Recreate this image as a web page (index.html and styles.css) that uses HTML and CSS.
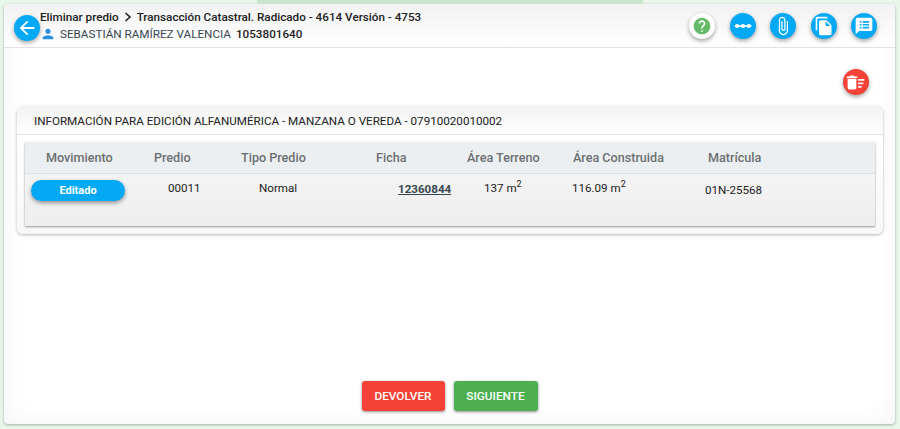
FILE: index.html
```html
<!DOCTYPE html>
<html lang="es">
<head>
  <meta charset="UTF-8">
  <meta name="viewport" content="width=device-width, initial-scale=1.0">
  <title>Eliminar predio</title>
  <link rel="stylesheet" href="styles.css">
</head>
<body>

  <div class="progress"></div>

  <div class="card">
    <header class="topbar">
      <button class="fab fab-back">
        <svg viewBox="0 0 24 24"><path d="M20 11H7.830l5.590-5.590L12 4l-8 8 8 8 1.410-1.410L7.830 13H20v-2z"/></svg>
      </button>
      <div class="title">
        <div class="title-main">
          <span>Eliminar predio</span>
          <svg class="chevron" viewBox="0 0 10 10"><path d="M2.500 1 L7 5 L2.500 9"/></svg>
          <span>Transacción Catastral. Radicado - 4614 Versión - 4753</span>
        </div>
        <div class="title-user">
          <svg class="user-icon" viewBox="0 0 24 24"><path d="M12 12c2.210 0 4-1.790 4-4s-1.790-4-4-4-4 1.790-4 4 1.790 4 4 4zm0 2c-2.670 0-8 1.340-8 4v2h16v-2c0-2.660-5.330-4-8-4z"/></svg>
          <span>SEBASTIÁN RAMÍREZ VALENCIA</span>
          <b>1053801640</b>
        </div>
      </div>
      <div class="actions">
        <button class="fab fab-help">
          <svg viewBox="0 0 24 24"><path d="M12 2C6.480 2 2 6.480 2 12s4.480 10 10 10 10-4.480 10-10S17.520 2 12 2zm1 17h-2v-2h2v2zm2.070-7.750l-.9.920C13.450 12.900 13 13.500 13 15h-2v-.5c0-1.100.45-2.100 1.170-2.830l1.240-1.260c.37-.36.59-.86.59-1.410 0-1.100-.9-2-2-2s-2 .9-2 2H8c0-2.210 1.790-4 4-4s4 1.790 4 4c0 .88-.36 1.680-.93 2.250z"/></svg>
        </button>
        <button class="fab">
          <svg viewBox="0 0 24 24"><path d="M2 11h20v2H2z"/><circle cx="5" cy="12" r="2.500"/><circle cx="12" cy="12" r="2.500"/><circle cx="19" cy="12" r="2.500"/></svg>
        </button>
        <button class="fab">
          <svg viewBox="0 0 24 24"><path d="M16.500 6v11.500c0 2.210-1.790 4-4 4s-4-1.790-4-4V5c0-1.380 1.120-2.500 2.500-2.500s2.500 1.120 2.500 2.500v10.500c0 .55-.45 1-1 1s-1-.45-1-1V6H10v9.500c0 1.380 1.120 2.500 2.500 2.500s2.500-1.120 2.500-2.500V5c0-2.210-1.790-4-4-4S7 2.790 7 5v12.500c0 3.040 2.460 5.500 5.500 5.500s5.500-2.460 5.500-5.500V6h-1.500z"/></svg>
        </button>
        <button class="fab">
          <svg viewBox="0 0 24 24"><path d="M16 1H4c-1.100 0-2 .9-2 2v14h2V3h12V1zm-1 4l6 6v10c0 1.100-.9 2-2 2H7.990C6.890 23 6 22.100 6 21l.01-14c0-1.100.89-2 1.990-2h7zm-1 7h5.500L14 6.500V12z"/></svg>
        </button>
        <button class="fab">
          <svg viewBox="0 0 24 24"><path fill-rule="evenodd" d="M20 2H4c-1.100 0-1.990.9-1.990 2L2 22l4-4h14c1.100 0 2-.9 2-2V4c0-1.100-.9-2-2-2zM7 6h2v2H7zM10.500 6H18v2h-7.500zM7 9.500h2v2H7zM10.500 9.500H18v2h-7.500zM7 13h2v2H7zM10.500 13H18v2h-7.500z"/></svg>
        </button>
      </div>
    </header>

    <div class="tools">
      <button class="fab fab-delete">
        <svg viewBox="0 0 24 24"><path d="M15 16h4v2h-4zm0-8h7v2h-7zm0 4h6v2h-6zM3 18c0 1.100.9 2 2 2h6c1.100 0 2-.9 2-2V8H3v10zM14 5h-3l-1-1H6L5 5H2v2h12z"/></svg>
      </button>
    </div>

    <section class="panel">
      <h2 class="panel-title">INFORMACIÓN PARA EDICIÓN ALFANUMÉRICA - MANZANA O VEREDA - 07910020010002</h2>
      <div class="grid-box">
        <div class="grid-head">
          <span>Movimiento</span>
          <span>Predio</span>
          <span>Tipo Predio</span>
          <span>Ficha</span>
          <span>Área Terreno</span>
          <span>Área Construida</span>
          <span>Matrícula</span>
        </div>
        <div class="grid-row">
          <span class="pill">Editado</span>
          <span>00011</span>
          <span>Normal</span>
          <a class="ficha" href="#">12360844</a>
          <span>137 m<sup>2</sup></span>
          <span>116.09 m<sup>2</sup></span>
          <span class="matricula">01N-25568</span>
        </div>
      </div>
    </section>

    <footer class="bottom">
      <button class="btn btn-red">DEVOLVER</button>
      <button class="btn btn-green">SIGUIENTE</button>
    </footer>
  </div>

</body>
</html>
```

FILE: styles.css
```css
* {
  box-sizing: border-box;
}

html, body {
  height: 100%;
}

body {
  font-family: 'Roboto', sans-serif;
  margin: 0;
  padding: 4px 5px 5px 4px;
  background-color: #e8f7e9;
  color: #212121;
  overflow: hidden;
}

/* barra superior de avance */
.progress {
  position: absolute;
  top: 0;
  left: 257px;
  width: 386px;
  height: 4px;
  background-color: #c8e6c9;
}

.card {
  height: 100%;
  display: flex;
  flex-direction: column;
  background-color: #fff;
  border-radius: 4px;
  box-shadow: 0 1px 3px rgba(0, 0, 0, 0.3), inset 0 0 24px rgba(0, 0, 0, 0.05);
}

.topbar {
  display: flex;
  align-items: center;
  height: 44px;
  padding: 0 18px 0 10px;
  border-bottom: 1px solid #e2e2e2;
  background: linear-gradient(#f2f2f2, #ffffff);
  border-radius: 4px 4px 0 0;
}

.fab {
  width: 26px;
  height: 26px;
  padding: 0;
  border: none;
  border-radius: 50%;
  background-color: #03a9f4;
  display: flex;
  align-items: center;
  justify-content: center;
  box-shadow: 0 2px 4px rgba(0, 0, 0, 0.35);
  flex-shrink: 0;
}

.fab svg {
  width: 20px;
  height: 20px;
  fill: #fff;
}

.fab-back {
  margin-top: 4px;
}

.fab-back svg {
  width: 22px;
  height: 22px;
}

.fab-help {
  background-color: #fff;
}

.fab-help svg {
  fill: #66bb6a;
}

.title {
  font-size: 11.700px;
  line-height: 17px;
}

.title-main {
  display: flex;
  align-items: center;
  font-weight: 500;
  color: #212121;
}

.chevron {
  width: 10px;
  height: 10px;
  margin: 0 4px 0 4px;
  fill: none;
  stroke: #212121;
  stroke-width: 1.6;
}

.title-user {
  display: flex;
  align-items: center;
  color: #37474f;
}

.title-user b {
  margin-left: 5px;
  font-weight: 500;
  color: #212121;
}

.user-icon {
  width: 16px;
  height: 16px;
  margin: 0 4px 0 0;
  fill: #2f8fdc;
}

.actions {
  display: flex;
  gap: 14.500px;
  margin-left: auto;
}

.tools {
  display: flex;
  justify-content: flex-end;
  padding: 21px 26.500px 0 0;
}

.fab-delete {
  background-color: #f44336;
}

.fab-delete svg {
  width: 21px;
  height: 21px;
}

.panel {
  margin: 11px 12px 0 13px;
  height: 128px;
  border-radius: 6px;
  background: linear-gradient(#f2f2f2 0, #fff 28px, #f8f8f8 100%);
  box-shadow: 0 1px 3px rgba(0, 0, 0, 0.3);
}

.panel-title {
  margin: 0;
  height: 29px;
  padding-left: 17px;
  font-size: 11.650px;
  line-height: 30px;
  font-weight: 400;
  color: #212121;
  border-bottom: 1px solid #e4e4e4;
}

.grid-box {
  margin: 7px 8px 0 8px;
  height: 84px;
  background: linear-gradient(#f7f7f7, #eeeeee);
  box-shadow: 0 1px 2px rgba(0, 0, 0, 0.4);
}

.grid-head {
  display: grid;
  grid-template-columns: 108px 87px 135px 91px 106px 135px 1fr;
  height: 32px;
  padding-left: 21px;
  align-items: center;
  background-color: #eceff1;
  border-bottom: 1px solid #e0e0e0;
  font-size: 12.600px;
  font-weight: 500;
  color: #6b6f72;
}

.grid-row {
  display: grid;
  grid-template-columns: 137px 91px 139px 86px 88px 133px 1fr;
  padding: 6px 0 0 6px;
  align-items: start;
  font-size: 11.600px;
  line-height: 17px;
  color: #212121;
}

.grid-row sup {
  font-size: 9px;
  line-height: 0;
}

.pill {
  width: 94px;
  height: 21px;
  line-height: 21px;
  border-radius: 11px;
  background-color: #03a9f4;
  color: #fff;
  font-size: 11px;
  font-weight: 700;
  text-align: center;
  box-shadow: 0 2px 4px rgba(0, 0, 0, 0.4);
}

.ficha {
  font-weight: 700;
  color: #37474f;
  margin-top: 1px;
}

.matricula {
  margin-top: 2px;
}

.bottom {
  display: flex;
  justify-content: center;
  gap: 9px;
  margin-top: auto;
  padding: 0 0 13px 0;
}

.btn {
  height: 30px;
  width: 83px;
  border: none;
  border-radius: 3px;
  color: #fff;
  font-family: 'Roboto', sans-serif;
  font-size: 11.800px;
  font-weight: 500;
  box-shadow: 0 1px 3px rgba(0, 0, 0, 0.45);
}

.btn-red {
  background-color: #f44336;
}

.btn-green {
  background-color: #4caf50;
  width: 84px;
}
```
